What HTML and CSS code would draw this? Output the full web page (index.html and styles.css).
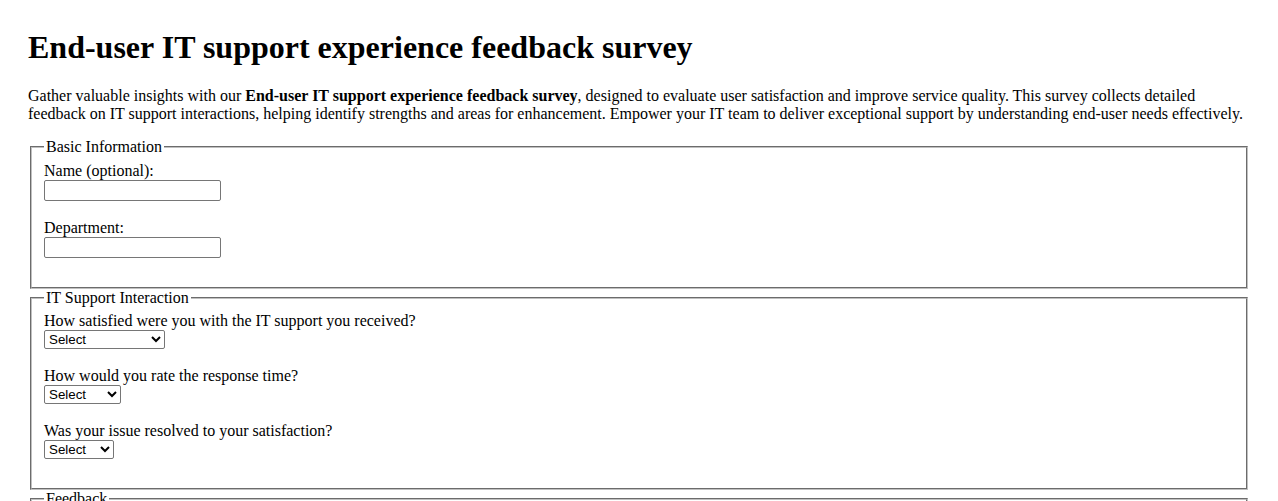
FILE: index.html
```html
<!DOCTYPE html>
<html lang="en">
<head>
<meta charset="utf-8">
<title>End-user IT support experience feedback survey</title>
<link rel="stylesheet" href="styles.css">
</head>
<body>
<div class="page">
<h1 class="title">End-user IT support experience feedback survey</h1>
<p class="intro">Gather valuable insights with our <strong>End-user IT support experience feedback survey</strong>, designed to evaluate user satisfaction and improve service quality. This survey collects detailed feedback on IT support interactions, helping identify strengths and areas for enhancement. Empower your IT team to deliver exceptional support by understanding end-user needs effectively.</p>
<form class="survey">
<fieldset class="group">
<legend>Basic Information</legend>
<label for="name">Name (optional):</label><br>
<input class="text-input" type="text" id="name" name="name"><br><br>
<label for="dept">Department:</label><br>
<input class="text-input" type="text" id="dept" name="dept"><br><br>
</fieldset>
<fieldset class="group">
<legend>IT Support Interaction</legend>
<label for="sat">How satisfied were you with the IT support you received?</label><br>
<select class="choice" id="sat" name="sat">
<option>Select</option>
<option>Very Satisfied</option>
<option>Satisfied</option>
<option>Neutral</option>
<option>Dissatisfied</option>
<option>Very Dissatisfied</option>
</select><br><br>
<label for="resp">How would you rate the response time?</label><br>
<select class="choice" id="resp" name="resp">
<option>Select</option>
<option>Excellent</option>
<option>Good</option>
<option>Average</option>
<option>Poor</option>
</select><br><br>
<label for="res">Was your issue resolved to your satisfaction?</label><br>
<select class="choice" id="res" name="res">
<option>Select</option>
<option>Yes</option>
<option>No</option>
<option>Partially</option>
</select><br><br>
</fieldset>
<fieldset class="group">
<legend>Feedback</legend>
<label for="comments">Additional comments:</label><br>
<textarea id="comments" name="comments" rows="4" cols="50"></textarea><br><br>
</fieldset>
</form>
</div>
</body>
</html>
```

FILE: styles.css
```css
html, body {
  margin: 0;
  padding: 0;
  background: #ffffff;
}
body {
  font-family: "Liberation Serif", "Times New Roman", serif;
  font-size: 16px;
  color: #000;
}
.page {
  padding: 8px 28px;
}
.title {
  font-size: 32px;
  font-weight: bold;
  margin: 21px 0;
}
.intro {
  margin: 16px 0 15px;
}
.group {
  margin: 0 2px;
  padding: 5.6px 12px 11px;
  border: 2px groove #c0c0c0;
}
.group legend {
  padding: 0 2px;
}
.text-input {
  width: 177px;
  height: 21px;
  box-sizing: border-box;
  border: 1px solid #767676;
  border-radius: 2px;
  font-family: "Liberation Sans", Arial, sans-serif;
  font-size: 13.33px;
}
.choice {
  height: 19px;
  font-family: "Liberation Sans", Arial, sans-serif;
  font-size: 13.33px;
  border: 1px solid #767676;
  border-radius: 2px;
  background: #fff;
  color: #000;
}
```
